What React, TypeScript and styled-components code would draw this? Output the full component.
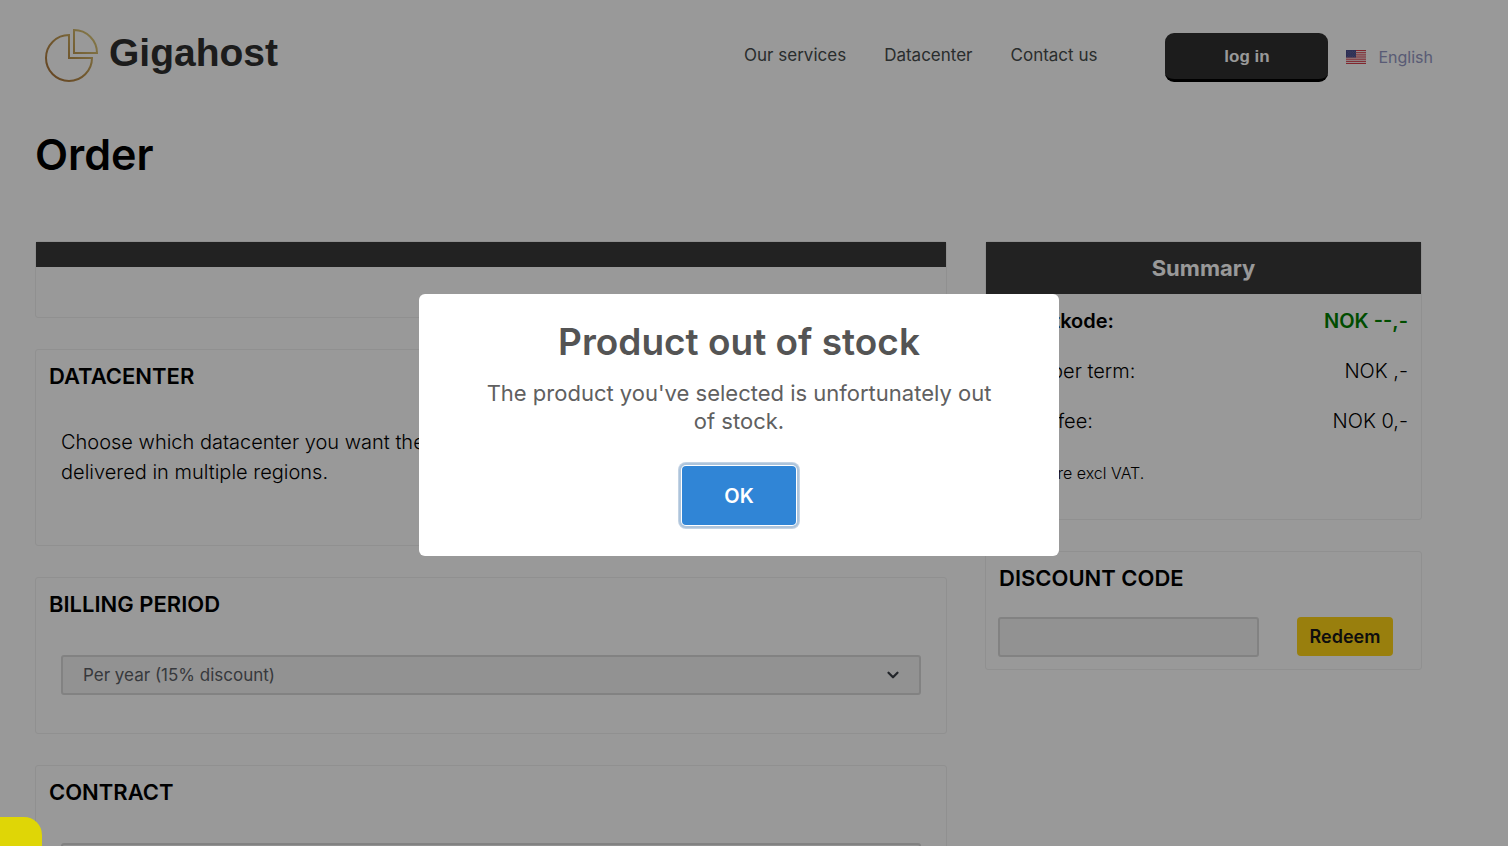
import React from "react";
import styled, { createGlobalStyle } from "styled-components";
import { ChevronDown } from "lucide-react";

const GlobalStyle = createGlobalStyle`
  *, *::before, *::after { box-sizing: border-box; }
  html, body, #root { height: 100%; }
  body {
    margin: 0;
    background: #ffffff;
    color: #000000;
    font-family: Inter, "Liberation Sans", sans-serif;
    overflow: hidden;
  }
  h1, h2, h3, p, dl, dd { margin: 0; }
  button, input, select { font-family: inherit; }
`;

const Page = styled.div`
  height: 100%;
  overflow: hidden;
`;

const Header = styled.header`
  display: flex;
  align-items: center;
  height: 114px;
  padding: 0 75px 0 44px;
`;

const Brand = styled.a`
  display: flex;
  align-items: center;
  gap: 10px;
  margin-right: auto;
  padding-bottom: 2px;
  color: #2f2f2f;
  font: bold 39px/44px "Liberation Sans", Arial, sans-serif;
  text-decoration: none;

  svg { display: block; }
  span { padding-bottom: 6px; }
`;

const Nav = styled.nav`
  display: flex;
  gap: 38px;
  margin-right: 68px;
  padding-bottom: 4px;
`;

const NavLink = styled.a`
  color: #464c4c;
  font-size: 17px;
  line-height: 24px;
  font-weight: 400;
  text-decoration: none;
`;

const LoginButton = styled.button`
  width: 163px;
  height: 49px;
  padding: 2px 0 0;
  border: 0;
  border-bottom: 3px solid #000000;
  border-radius: 9px;
  background: #2f2f2f;
  color: #ffffff;
  font: bold 17px/24px "Liberation Sans", Arial, sans-serif;
`;

const Language = styled.a`
  display: flex;
  align-items: center;
  gap: 12px;
  margin-left: 18px;
  color: #9498c4;
  font-size: 16px;
  line-height: 24px;
  font-weight: 400;
  text-decoration: none;
`;

const Main = styled.main`
  padding: 0 86px 0 35px;
`;

const Title = styled.h1`
  padding: 10px 0 57px;
  font-size: 43px;
  line-height: 60px;
  font-weight: 600;
`;

const Columns = styled.div`
  display: grid;
  grid-template-columns: 912fr 437fr;
  gap: 38px;
  align-items: start;
`;

const Column = styled.div`
  display: flex;
  flex-direction: column;
  gap: 31px;
`;

const Card = styled.section<{ $space?: number }>`
  padding-bottom: ${(p) => p.$space ?? 0}px;
  border: 1px solid #f0f0f0;
  border-radius: 3px;
`;

const CardBar = styled.h2`
  min-height: 25px;
  background: #393939;
  color: #ffffff;
  font-size: 22px;
  line-height: 52px;
  font-weight: 700;
  text-align: center;
`;

const CardTitle = styled.h3`
  padding: 11px 13px 0;
  font-size: 22px;
  line-height: 30px;
  font-weight: 600;
  text-transform: uppercase;
`;

const CardBody = styled.div`
  padding: 36px 25px 0;
`;

const Copy = styled.p`
  font-size: 20px;
  line-height: 30px;
  font-weight: 300;
`;

const SelectWrap = styled.label`
  display: grid;
  align-items: center;

  > * { grid-area: 1 / 1; }
  svg { justify-self: end; margin-right: 19px; color: #393e46; pointer-events: none; }
`;

const Select = styled.select`
  width: 100%;
  height: 40px;
  padding: 0 40px 0 20px;
  appearance: none;
  border: 2px solid #d9d9d9;
  border-radius: 3px;
  background: #f4f4f4;
  color: #5c6066;
  font-size: 17px;
  font-weight: 400;
`;

const Rows = styled.dl`
  padding: 2px 13px 0 12px;
`;

const Row = styled.div<{ $strong?: boolean }>`
  display: flex;
  justify-content: space-between;
  font-size: 20px;
  line-height: 50px;
  font-weight: ${(p) => (p.$strong ? 600 : 300)};

  dd { color: ${(p) => (p.$strong ? "#008000" : "inherit")}; }
`;

const Note = styled.p`
  padding: 15px 12px 0;
  font-size: 16px;
  line-height: 24px;
  font-weight: 300;
`;

const DiscountForm = styled.form`
  display: flex;
  align-items: flex-start;
  gap: 38px;
  padding: 24px 28px 0 12px;
`;

const CodeInput = styled.input`
  flex: 1;
  min-width: 0;
  height: 40px;
  border: 2px solid #d9d9d9;
  border-radius: 3px;
  background: #f4f4f4;
`;

const RedeemButton = styled.button`
  width: 96px;
  height: 39px;
  padding: 0;
  border: 0;
  border-radius: 4px;
  background: #ffd416;
  color: #181818;
  font-size: 18px;
  font-weight: 600;
`;

const Overlay = styled.div`
  position: fixed;
  inset: 0;
  z-index: 10;
  display: flex;
  align-items: center;
  justify-content: center;
  padding: 4px 30px 0 0;
  background: rgba(0, 0, 0, 0.4);
`;

const Dialog = styled.div`
  display: flex;
  flex-direction: column;
  align-items: center;
  width: 640px;
  max-width: 90%;
  padding: 22px 60px 31px;
  border-radius: 6px;
  background: #ffffff;
  text-align: center;
`;

const DialogTitle = styled.h2`
  color: #545454;
  font-size: 37px;
  line-height: 52px;
  font-weight: 600;
`;

const DialogText = styled.p`
  margin-top: 11px;
  color: #606060;
  font-size: 22px;
  line-height: 28px;
  font-weight: 400;
`;

const OkButton = styled.button`
  width: 114px;
  height: 59px;
  margin-top: 31px;
  padding: 0;
  border: 0;
  border-radius: 4px;
  background: #3085d6;
  box-shadow: 0 0 0 1px #ffffff, 0 0 0 3px #adc4db, 0 0 0 4px #c3d3e4;
  color: #ffffff;
  font-size: 20px;
  font-weight: 600;
`;

const ChatTab = styled.aside`
  position: fixed;
  left: 0;
  bottom: 0;
  z-index: 20;
  width: 42px;
  height: 29px;
  border-radius: 0 18px 0 0;
  background: #dfd606;
`;

const Logo = () => (
  <svg width="55" height="56" viewBox="0 0 55 56" fill="none" aria-hidden="true">
    <defs>
      <linearGradient id="gold" x1="3" y1="48" x2="52" y2="8" gradientUnits="userSpaceOnUse">
        <stop offset="0" stopColor="#a8733a" />
        <stop offset="0.5" stopColor="#bf9750" />
        <stop offset="1" stopColor="#dcc97c" />
      </linearGradient>
    </defs>
    <g stroke="url(#gold)" strokeWidth="2">
      <path d="M25 7A23 23 0 1 0 48 30H25Z" />
      <path d="M30 2V25H53A23 23 0 0 0 30 2Z" />
    </g>
  </svg>
);

const Flag = () => (
  <svg width="20" height="14" viewBox="0 0 20 14" aria-hidden="true">
    <path fill="#f3e6e8" d="M0 0h20v14H0z" />
    <path
      stroke="#d8404e"
      strokeWidth="1"
      d="M0 .5h20M0 2.7h20M0 4.9h20M0 7h20M0 9.2h20M0 11.4h20M0 13.5h20"
    />
    <path fill="#4b4d8c" d="M0 0h10v7.5H0z" />
    <path
      stroke="#8e90bd"
      strokeWidth=".6"
      strokeDasharray=".6 1.2"
      d="M1 1.3h9M2 2.6h8M1 3.9h9M2 5.2h8M1 6.4h9"
    />
  </svg>
);

export default function App() {
  return (
    <>
      <GlobalStyle />
      <Page>
        <Header>
          <Brand href="#">
            <Logo />
            <span>Gigahost</span>
          </Brand>
          <Nav>
            <NavLink href="#services">Our services</NavLink>
            <NavLink href="#datacenter">Datacenter</NavLink>
            <NavLink href="#contact">Contact us</NavLink>
          </Nav>
          <LoginButton type="button">log in</LoginButton>
          <Language href="#language">
            <Flag />
            English
          </Language>
        </Header>
        <Main>
          <Title>Order</Title>
          <Columns>
            <Column>
              <Card $space={50}>
                <CardBar />
              </Card>
              <Card $space={58}>
                <CardTitle>Datacenter</CardTitle>
                <CardBody>
                  <Copy>
                    Choose which datacenter you want the product in. We can be
                    <br />
                    delivered in multiple regions.
                  </Copy>
                </CardBody>
              </Card>
              <Card $space={38}>
                <CardTitle>Billing period</CardTitle>
                <CardBody>
                  <SelectWrap>
                    <Select aria-label="Billing period" defaultValue="year">
                      <option value="year">Per year (15% discount)</option>
                    </Select>
                    <ChevronDown size={18} strokeWidth={3} />
                  </SelectWrap>
                </CardBody>
              </Card>
              <Card $space={38}>
                <CardTitle>Contract</CardTitle>
                <CardBody>
                  <SelectWrap>
                    <Select aria-label="Contract" />
                  </SelectWrap>
                </CardBody>
              </Card>
            </Column>
            <Column>
              <Card $space={34}>
                <CardBar>Summary</CardBar>
                <Rows>
                  <Row $strong>
                    <dt>Rabattkode:</dt>
                    <dd>NOK --,-</dd>
                  </Row>
                  <Row>
                    <dt>Price per term:</dt>
                    <dd>NOK ,-</dd>
                  </Row>
                  <Row>
                    <dt>Setup fee:</dt>
                    <dd>NOK 0,-</dd>
                  </Row>
                </Rows>
                <Note>Prices are excl VAT.</Note>
              </Card>
              <Card $space={12}>
                <CardTitle>Discount code</CardTitle>
                <DiscountForm>
                  <CodeInput type="text" aria-label="Discount code" />
                  <RedeemButton type="button">Redeem</RedeemButton>
                </DiscountForm>
              </Card>
            </Column>
          </Columns>
        </Main>
      </Page>
      <Overlay>
        <Dialog role="dialog" aria-modal="true" aria-labelledby="dialog-title">
          <DialogTitle id="dialog-title">Product out of stock</DialogTitle>
          <DialogText>The product you've selected is unfortunately out of stock.</DialogText>
          <OkButton type="button">OK</OkButton>
        </Dialog>
      </Overlay>
      <ChatTab />
    </>
  );
}
